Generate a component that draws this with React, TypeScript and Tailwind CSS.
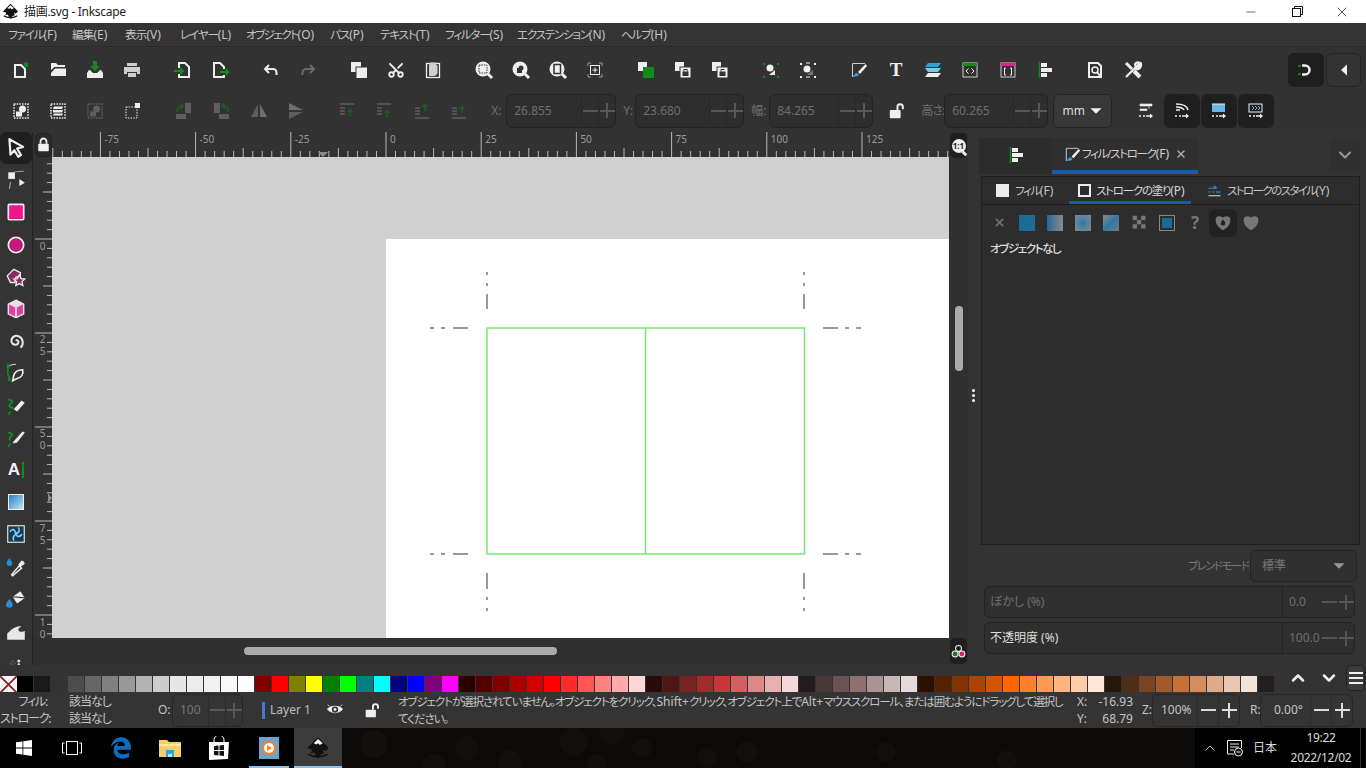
import React from 'react';
import { Scissors, ChevronUp, ChevronDown, Minus, X } from 'lucide-react';
import { FaEdgeLegacy } from 'react-icons/fa';

const W = '#efefef';
const G = '#128a1e';
const D = '#5e5e5e';
const M = '#e0218a';
const B = '#3a9bd5';

const S: React.FC<{ children: React.ReactNode; size?: number }> = ({ children, size = 20 }) => (
  <svg width={size} height={size} viewBox="0 0 20 20" fill="none">{children}</svg>
);

const Mag: React.FC<{ children: React.ReactNode }> = ({ children }) => (
  <S>
    <circle cx="9" cy="9" r="7.5" fill={W} />
    <path d="M14 14l4 4" stroke={W} strokeWidth="3" />
    {children}
  </S>
);

const OpenLock: React.FC<{ size: number }> = ({ size }) => (
  <S size={size}>
    <rect x="2" y="9" width="12" height="9" rx="1" fill={W} />
    <path d="M10.500 9V5.500a3 3 0 0 1 6 0V8" stroke={W} strokeWidth="2.200" />
  </S>
);

const ClosedLock: React.FC<{ size: number }> = ({ size }) => (
  <S size={size}>
    <rect x="3" y="9" width="14" height="10" rx="1" fill={W} />
    <path d="M6 9V6a4 4 0 0 1 8 0v3" stroke={W} strokeWidth="2.400" />
  </S>
);

// toolbar 1
const row1Groups: { key: string; icon: React.ReactNode }[][] = [
  [
    { key: 'new', icon: <S><path d="M4 5h6l4 4v8H4z" stroke={W} strokeWidth="2" /><path d="M15 1l1 2.3 2.4.3-1.8 1.6.5 2.4-2.1-1.2-2.1 1.2.5-2.4L11.600 3.600l2.400-.3z" fill={G} /></S> },
    { key: 'open', icon: <S><path d="M3 3h5l2 2h7v2H6.500L3 10z" fill={W} /><path d="M7 8.500h11V16H3v-3z" fill={W} /></S> },
    { key: 'save', icon: <S><path d="M8 1h4v5h3l-5 5-5-5h3z" fill={G} /><path d="M2 13l2-3h1l3 3h4l3-3h1l2 3v5H2z" fill={W} /></S> },
    { key: 'print', icon: <S><path d="M5 3h10v3H5zM2 7h16v7h-3v-2H5v2H2z" fill="#cfcfcf" /><path d="M6 13h8v4H6z" fill="#cfcfcf" /></S> },
  ],
  [
    { key: 'import', icon: <S><path d="M6 8V3h6l4 4v10H6v-3" stroke={W} strokeWidth="2" /><path d="M1 11h8M7 8l3 3-3 3" stroke={G} strokeWidth="2" /></S> },
    { key: 'export', icon: <S><path d="M14 9V7l-4-4H4v14h10v-2" stroke={W} strokeWidth="2" /><path d="M10 12h8M15.500 9l3 3-3 3" stroke={G} strokeWidth="2" /></S> },
  ],
  [
    { key: 'undo', icon: <S><path d="M8 5L4 9l4 4" stroke={W} strokeWidth="2" /><path d="M5 9h7a3.500 3.500 0 0 1 3.500 3.500V15" stroke={W} strokeWidth="2" /></S> },
    { key: 'redo', icon: <S><path d="M12 5l4 4-4 4" stroke="#6a6a6a" strokeWidth="2" /><path d="M15 9H8a3.500 3.500 0 0 0-3.500 3.500V15" stroke="#6a6a6a" strokeWidth="2" /></S> },
  ],
  [
    { key: 'dup', icon: <S><rect x="2" y="2" width="10" height="10" fill={W} /><rect x="7" y="7" width="11.500" height="11.500" fill={W} stroke="#333" /></S> },
    { key: 'cut', icon: <Scissors size={18} color={W} strokeWidth={2.4} className="-rotate-90" /> },
    { key: 'paste', icon: <S><rect x="3.500" y="3.500" width="13" height="14" stroke={W} strokeWidth="1.300" /><path d="M7 2.500h6v2l1.500 1v8L12 16H6V5.500z" fill="#cfcfcf" /></S> },
  ],
  [
    { key: 'zsel', icon: <Mag><rect x="5" y="5" width="8" height="8" stroke="#333" strokeDasharray="1.500 1" /></Mag> },
    { key: 'zdraw', icon: <Mag><circle cx="10" cy="8" r="2.500" fill="#333" /><rect x="6" y="8" width="5" height="5" fill="#333" /></Mag> },
    { key: 'zpage', icon: <Mag><rect x="6" y="4.500" width="6.500" height="9" stroke="#333" strokeWidth="1.500" /></Mag> },
    { key: 'zcen', icon: <S><path d="M3 6V3h3M14 3h3v3M17 14v3h-3M6 17H3v-3" stroke="#999" /><rect x="5.500" y="5.500" width="9" height="9" stroke={W} /><path d="M10 7.500v5M7.500 10h5" stroke={W} /></S> },
  ],
  [
    { key: 'group', icon: <S><rect x="2" y="2" width="9" height="9" fill={W} /><rect x="7" y="7" width="11" height="11" fill={G} /></S> },
    { key: 'ungroup', icon: <S><rect x="2" y="2" width="9" height="9" fill={W} /><rect x="7" y="7" width="11" height="11" fill={W} stroke="#333" /><rect x="9.500" y="11.500" width="6" height="4.500" fill="#333" /><path d="M10.800 11.500V9.500h3.400v2" stroke="#333" /></S> },
    { key: 'pattern', icon: <S><rect x="2" y="2" width="9" height="9" fill={W} /><rect x="7" y="7" width="11" height="11" fill={W} stroke="#333" /><rect x="9.500" y="11.500" width="6" height="4.500" fill="#333" /><path d="M11 11.500V9.500h3.500" stroke="#333" /></S> },
  ],
  [
    { key: 'nodes', icon: <S><path d="M2 3h2v2H2zM16 3h2v2h-2zM2 16h2v2H2zM16 16h2v2h-2z" fill={G} /><circle cx="9" cy="8" r="3.500" fill={W} /><path d="M8 15l6-5v5z" fill={W} /></S> },
    { key: 'nodes2', icon: <S><path d="M2 3h2v2H2zM16 3h2v2h-2zM2 16h2v2H2zM16 16h2v2h-2z" fill={W} /><path d="M8 3h4M8 17h4" stroke={W} /><circle cx="9" cy="9" r="3.500" fill={W} /><path d="M9 15l6-5v5z" fill="#777" /></S> },
  ],
  [
    { key: 'fill', icon: <S><path d="M3.500 17V3.500H16" stroke="#cfcfcf" /><path d="M16.500 4L9 12l2 2 7-8z" fill={W} /><path d="M8 13c-2 0-2.500 2-4.500 3.500C6 17 9 16.500 10 15z" fill={B} /></S> },
    { key: 'text', icon: <span className="font-['Liberation_Serif',serif] text-[19px] font-bold leading-none text-[#efefef]">T</span> },
    { key: 'layers', icon: <S><path d="M5 3h13l-3 4H2z" fill={B} /><path d="M2 8h16l-3 4H5z" fill="#7fc6ea" /><path d="M5 13h13l-3 4H2z" fill={W} /></S> },
    { key: 'xml', icon: <S><rect x="3" y="3" width="14" height="14" stroke="#cfcfcf" /><rect x="3" y="3" width="14" height="3" fill={G} /><path d="M8.500 8.500L6 11l2.500 2.500M11.500 8.500L14 11l-2.500 2.500" stroke={W} /></S> },
    { key: 'css', icon: <S><rect x="3" y="3" width="14" height="14" stroke="#cfcfcf" /><rect x="3" y="3" width="14" height="3" fill={M} /><path d="M8 8H6.500v7H8M12 8h1.500v7H12" stroke={W} /></S> },
    { key: 'align', icon: <S><path d="M4.500 2v16" stroke={G} strokeWidth="1.500" /><path d="M6 3h6v4H6zM6 8h11v4H6zM6 13h6v4H6z" fill={W} /></S> },
  ],
  [
    { key: 'docprops', icon: <S><path d="M4 3h9l3 3v11H4z" stroke={W} strokeWidth="2" /><circle cx="10" cy="10" r="3" stroke={W} strokeWidth="1.500" /><path d="M12 12l4 5" stroke={W} strokeWidth="2" /></S> },
    { key: 'prefs', icon: <S><path d="M3 3l6 6" stroke={W} strokeWidth="3" /><path d="M11 11l6 6" stroke={W} strokeWidth="4" /><path d="M3 17L13 7M12 4a4 4 0 0 1 5-1l-3 3 1 1 3-3a4 4 0 0 1-5 5z" stroke={W} strokeWidth="2.200" /></S> },
  ],
];

const AlignGrey: React.FC<{ y: number; top?: boolean }> = ({ y, top }) => (
  <S>
    <path d={top ? 'M3 3h14' : 'M3 17h14'} stroke={D} strokeWidth="1.500" />
    <path d="M3 7h5M3 10h5M3 13h5" stroke={D} strokeWidth="1.500" />
    <path d={`M13 ${y + 6}v-6M10.500 ${y + 2}l2.500-2.500 2.500 2.500`} stroke="#1c5a24" strokeWidth="1.800" />
  </S>
);

const row2Left: { key: string; icon: React.ReactNode }[][] = [
  [
    { key: 'all', icon: <S><rect x="3" y="3" width="14" height="14" stroke={W} strokeWidth="1.500" strokeDasharray="1.500 1.200" /><circle cx="11.500" cy="8" r="3.500" fill={W} /><rect x="5" y="10.500" width="6" height="5" fill={W} /></S> },
    { key: 'all2', icon: <S><rect x="3" y="3" width="14" height="14" stroke={W} strokeWidth="1.500" strokeDasharray="1.500 1.200" /><path d="M6 5.500h9l-1 2.500H5zM5 9h10l-1 2.500H5zM6 12.500h9l-1 2H5z" fill={W} /></S> },
    { key: 'inv', icon: <S><rect x="3" y="3" width="14" height="14" stroke={D} strokeWidth="1.500" strokeDasharray="1.500 1.200" /><circle cx="11.500" cy="8" r="3.500" fill={D} /><rect x="5" y="10.500" width="6" height="5" fill={D} /></S> },
    { key: 'touch', icon: <S><rect x="3" y="6" width="11" height="11" stroke={W} strokeDasharray="1.500 1.200" /><rect x="12" y="2" width="5" height="5" fill={W} /></S> },
  ],
  [
    { key: 'rl', icon: <S><rect x="11" y="2" width="6" height="10" fill={D} /><rect x="2" y="13" width="10" height="5" fill={D} /><path d="M3 11c0-4 2-6 6-6M6.500 2.500L9 5l-2.500 2.500" stroke="#1c5a24" strokeWidth="2" /></S> },
    { key: 'rr', icon: <S><rect x="3" y="2" width="6" height="10" fill={D} /><rect x="8" y="13" width="10" height="5" fill={D} /><path d="M17 11c0-4-2-6-6-6M13.500 2.500L11 5l2.500 2.500" stroke="#1c5a24" strokeWidth="2" /></S> },
    { key: 'fh', icon: <S><path d="M9 3L2 16h7z" fill={D} /><path d="M11 3l7 13h-7z" fill="#6e6e6e" /></S> },
    { key: 'fv', icon: <S><path d="M3 2l14 7H3z" fill="#6e6e6e" /><path d="M3 18l14-7H3z" fill={D} /><path d="M2 10h16" stroke="#333" /></S> },
  ],
  [
    { key: 'a1', icon: <AlignGrey y={9} top /> },
    { key: 'a2', icon: <AlignGrey y={10} top /> },
    { key: 'a3', icon: <AlignGrey y={4} /> },
    { key: 'a4', icon: <AlignGrey y={6} /> },
  ],
];

const tools: { key: string; icon: React.ReactNode; active?: boolean }[] = [
  { key: 'select', active: true, icon: <S size={22}><path d="M4 2l12.500 7-5.500 1.500 3.500 6-2.500 1.500-3.500-6L5 16z" stroke={W} strokeWidth="2" strokeLinejoin="round" /></S> },
  { key: 'node', icon: <S size={22}><rect x="3" y="3" width="6" height="6" fill={W} /><path d="M8 3c3-1 5-1 9-1M5 12l-1 6" stroke="#aaa" /><path d="M13 9l5 3.500-5 3z" fill={W} /></S> },
  { key: 'rect', icon: <S size={22}><rect x="3" y="3" width="14" height="14" rx="1" fill="#f0148c" stroke={W} strokeWidth="1.500" /></S> },
  { key: 'circle', icon: <S size={22}><circle cx="10" cy="10" r="7" fill="#c2197c" stroke={W} strokeWidth="1.500" /></S> },
  { key: 'star', icon: <S size={22}><path d="M2 9l6-6 6 3 0 3-4 1-1 5-4 0z" fill="#8a2a66" stroke={W} strokeWidth="1.200" /><path d="M13 8l1.600 3.400 3.400.4-2.500 2.400.7 3.500-3.200-1.700-3.200 1.700.7-3.500L8 11.800l3.400-.4z" fill="#8a2a66" stroke={W} strokeWidth="1.200" /></S> },
  { key: 'box', icon: <S size={22}><path d="M10 2l7 3.500v9L10 18l-7-3.500v-9z" fill="#e33fa0" stroke={W} strokeWidth="1.200" /><path d="M3 5.500L10 9l7-3.500L10 2z" fill="#f3d7e8" /><path d="M10 9v9" stroke={W} strokeWidth="1.500" /></S> },
  { key: 'spiral', icon: <S size={22}><path d="M10 10c1-1.500 3 0 2 2-1 2-5 2-6-1-1-4 3-7 7-5 4 2 4 8 1 10" stroke="#e8e8e8" strokeWidth="1.800" /></S> },
  { key: 'pen', icon: <S size={22}><path d="M2 5c2-2 5-3 8-3" stroke="#ccc" /><circle cx="3" cy="3" r="1.500" fill={G} /><path d="M3 4c-1 4 0 9 1 11" stroke={G} strokeWidth="1.500" /><circle cx="4" cy="16" r="1.500" fill={G} /><path d="M16 7c1 4-1 7-5 8l-4 2 1-5c1-3 4-5 8-5z" stroke={W} strokeWidth="1.500" /></S> },
  { key: 'pencil', icon: <S size={22}><path d="M3 18l2-3M3 4c2 1 5 1 3 3S3 10 5 11s3 0 2 2" stroke={G} strokeWidth="1.800" /><path d="M8 13l7-8 3 2-7 8z" fill={W} /></S> },
  { key: 'callig', icon: <S size={22}><path d="M3 18l2-3M3 5c2 1 5 1 3 3S3 11 5 12" stroke={G} strokeWidth="1.800" /><path d="M8 13l8-9 2 1-7 9-4 1z" fill={W} /></S> },
  { key: 'text', icon: <div className="flex items-center"><span className="font-['Liberation_Sans',sans-serif] text-[17px] font-bold leading-none text-[#efefef]">A</span><div className="ml-[2px] h-[16px] w-[2px] bg-[#128a1e]" /></div> },
  { key: 'grad', icon: <div className="h-[16px] w-[16px] border border-[#efefef] bg-linear-to-br from-[#1f7fc0] to-[#bfe6fa]" /> },
  { key: 'mesh', icon: <S size={22}><rect x="2.500" y="2.500" width="15" height="15" fill="#163c55" stroke={W} /><path d="M4.500 8c2-3 4-3 5.500 2 1 3 3.500 3 5.500 0M8 16c-1-2-1-4 2-6s4-3 2-6" stroke="#7fd0f5" strokeWidth="1.400" /></S> },
  { key: 'dropper', icon: <S size={22}><path d="M4 2c1.500 2 2.500 3 2.500 4.500a2.500 2.500 0 0 1-5 0C1.500 5 2.500 4 4 2z" fill="#2590d8" /><path d="M6 17l7-8 2 2-8 7z" stroke={W} strokeWidth="1.300" /><path d="M12 8l3-4 2 1 1 2-4 3z" fill={W} /></S> },
  { key: 'bucket', icon: <S size={22}><path d="M7 8l7-5 4 6-7 5z" fill={W} /><path d="M7 8l11 1" stroke="#333" /><path d="M4 10c1.500 2 3 3.500 3 5a3 3 0 0 1-6 0c0-1.500 1.500-3 3-5z" fill="#2590d8" /></S> },
  { key: 'tweak', icon: <S size={22}><path d="M2 18v-6c2-1 3-3 5-4 3-2 6-3 8-2-2 1-3 2-3 3 1 2 4 2 6 1v8z" fill="#e8e8e8" /></S> },
  { key: 'more', icon: <S size={16}><circle cx="6" cy="10" r="2.500" stroke="#999" strokeDasharray="1 1" /><path d="M11 14l2-4h1l2 4z" fill="#ddd" /><circle cx="13.500" cy="7.500" r="2" fill="#ddd" /></S> },
];

const palette = [
  '#000000', '#1a1a1a', '#333333', '#4d4d4d', '#666666', '#808080', '#999999', '#b3b3b3', '#cccccc', '#e6e6e6', '#ececec', '#f2f2f2', '#f9f9f9', '#ffffff',
  '#800000', '#ff0000', '#808000', '#ffff00', '#008000', '#00ff00', '#008080', '#00ffff', '#000080', '#0000ff', '#800080', '#ff00ff',
  '#2b0000', '#550000', '#800000', '#aa0000', '#d40000', '#ff0000', '#ff2a2a', '#ff5555', '#ff8080', '#ffaaaa', '#ffd5d5',
  '#280b0b', '#501616', '#782121', '#a02c2c', '#c83737', '#d35f5f', '#de8787', '#e9afaf', '#f4d7d7',
  '#241c1c', '#483737', '#6c5353', '#916f6f', '#ac9393', '#c8b7b7', '#e3dbdb',
  '#2b1100', '#552200', '#803300', '#aa4400', '#d45500', '#ff6600', '#ff7f2a', '#ff9955', '#ffb380', '#ffccaa', '#ffe6d5',
  '#28170b', '#502d16', '#784421', '#a05a2c', '#c87137', '#d38d5f', '#deaa87', '#e9c6af', '#f4e3d7', '#241f1c',
];

const menus = [
  { kana: 'ファイル', key: '(F)', w: 'w-[64px]', t: 'tracking-[-1.100px]' },
  { kana: '編集', key: '(E)', w: 'w-[53px]', t: 'tracking-[-0.800px]' },
  { kana: '表示', key: '(V)', w: 'w-[55px]', t: 'tracking-[-0.800px]' },
  { kana: 'レイヤー', key: '(L)', w: 'w-[66px]', t: 'tracking-[-1.100px]' },
  { kana: 'オブジェクト', key: '(O)', w: 'w-[84px]', t: 'tracking-[-1.500px]' },
  { kana: 'パス', key: '(P)', w: 'w-[50px]', t: 'tracking-[-1px]' },
  { kana: 'テキスト', key: '(T)', w: 'w-[65px]', t: 'tracking-[-1.100px]' },
  { kana: 'フィルター', key: '(S)', w: 'w-[72px]', t: 'tracking-[-1.200px]' },
  { kana: 'エクステンション', key: '(N)', w: 'w-[104px]', t: 'tracking-[-1.200px]' },
  { kana: 'ヘルプ', key: '(H)', w: 'w-[60px]', t: 'tracking-[-1.100px]' },
];

const Logo: React.FC<{ size: number }> = ({ size }) => (
  <svg width={size} height={size} viewBox="0 0 20 20">
    <path d="M10 1l9 9-3 2.500-2-1 1 3-3 1v2l-2 1-2-2-1-3-3 1 1-3-4-1.500z" fill="#111" />
    <path d="M10 2.500L6.500 6l2 1 1.500-1 1.500 1.500L14 6z" fill="#f4f4f4" />
    <path d="M2 15c4 3 12 3 16 0" stroke="#111" strokeWidth="1.200" fill="none" />
  </svg>
);

const Stepper: React.FC<{ color: string; line: string; wide?: boolean }> = ({ color, line, wide }) => (
  <div className="flex h-full items-center">
    <div className={`flex h-full items-center justify-center border-l ${line} ${wide ? 'w-[21px]' : 'w-[17px]'}`}>
      <div className={`h-[2px] w-[15px] ${color}`} />
    </div>
    <div className={`relative flex h-full items-center justify-center border-l ${line} ${wide ? 'w-[21px]' : 'w-[17px]'}`}>
      <div className={`h-[2px] w-[15px] ${color}`} />
      <div className={`absolute h-[15px] w-[2px] ${color}`} />
    </div>
  </div>
);

const NumField: React.FC<{ value: string; w: string }> = ({ value, w }) => (
  <div className="flex h-[34px] shrink-0 items-center rounded-[6px] border border-[#232323] bg-[#2e2e2e]">
    <span className={`${w} pl-[7px] text-[12px] text-[#6f6f6f]`}>{value}</span>
    <Stepper color="bg-[#585858]" line="border-[#292929]" />
  </div>
);

const TopRuler: React.FC = () => {
  const ticks = [];
  for (let i = -36; i < 60; i++) {
    const x = 334 + i * 9.52;
    const h = i % 10 === 0 ? 25 : i % 5 === 0 ? 9 : 6;
    ticks.push(<line key={i} x1={x} x2={x} y1={25 - h} y2={25} stroke="#b9b9b9" strokeWidth="1" />);
  }
  const labels = [-75, -50, -25, 0, 25, 50, 75, 100, 125];
  return (
    <svg width="897" height="25" className="shrink-0">
      {ticks}
      {labels.map((n) => (
        <text key={n} x={334 + n * 3.808 + 4} y={11} fontSize="10" fill="#9a9a9a" fontFamily="Noto Sans, sans-serif">{n}</text>
      ))}
      <path d="M266 20h10l-5 5z" fill="#8a8a8a" />
    </svg>
  );
};

const LeftRuler: React.FC = () => {
  const ticks = [];
  for (let i = -8; i < 43; i++) {
    const y = 82 + i * 9.4;
    const w = i % 10 === 0 ? 17 : i % 5 === 0 ? 9 : 5;
    ticks.push(<line key={i} x1={19 - w} x2={19} y1={y} y2={y} stroke="#b9b9b9" strokeWidth="1" />);
  }
  const labels: { y: number; t: string }[] = [
    { y: 93, t: '0' }, { y: 186, t: '2' }, { y: 198, t: '5' }, { y: 280, t: '5' }, { y: 292, t: '0' },
    { y: 375, t: '7' }, { y: 387, t: '5' }, { y: 469, t: '1' }, { y: 481, t: '0' },
  ];
  return (
    <svg width="19" height="490" className="relative z-10 shrink-0">
      {ticks}
      {labels.map((l) => (
        <text key={l.y} x="9.500" y={l.y} fontSize="10" textAnchor="middle" fill="#9a9a9a" fontFamily="Noto Sans, sans-serif">{l.t}</text>
      ))}
      <path d="M15 336l4 5-4 5z" fill="#8a8a8a" />
    </svg>
  );
};

const Artwork: React.FC = () => (
  <svg width="563" height="399" viewBox="386 239 563 399" className="block">
    <g fill="none" stroke="#6fe66f" strokeWidth="1.400">
      <rect x="487" y="328" width="317.500" height="226" />
      <line x1="645.500" x2="645.500" y1="328" y2="554" />
    </g>
    <g fill="none" stroke="#777" strokeWidth="1.500">
      {[487, 804].map((x) => (
        <g key={x}>
          <path d={`M${x} 272v3M${x} 283v3M${x} 294v15M${x} 573v16M${x} 597v3M${x} 608v3`} />
        </g>
      ))}
      {[328, 554].map((y) => (
        <g key={y}>
          <path d={`M430 ${y}h4M441 ${y}h4M453 ${y}h15M823 ${y}h15M845 ${y}h4M856 ${y}h5`} />
        </g>
      ))}
    </g>
  </svg>
);

const TaskIcon: React.FC<{ children: React.ReactNode; cls: string }> = ({ children, cls }) => (
  <div className={`relative flex h-full shrink-0 items-center justify-center ${cls}`}>{children}</div>
);

export default function App() {
  return (
    <div className="flex h-[768px] w-[1366px] flex-col overflow-hidden bg-[#333333] font-['Noto_Sans','Noto_Sans_CJK_JP',sans-serif] [font-feature-settings:'palt']">
      {/* title bar */}
      <div className="flex h-[23px] shrink-0 items-center bg-white pl-[2px] text-[12px] text-[#222]">
        <Logo size={17} />
        <span className="ml-[5px] tracking-[-0.3px]">描画.svg - Inkscape</span>
        <div className="ml-auto flex items-center">
          <div className="flex w-[46px] justify-center"><Minus size={14} strokeWidth={1} color="#111" /></div>
          <div className="flex w-[46px] justify-center">
            <svg width="11" height="11" viewBox="0 0 11 11" fill="none" stroke="#111"><rect x=".5" y="2.500" width="8" height="8" /><path d="M2.500 2.500v-2h8v8h-2" /></svg>
          </div>
          <div className="flex w-[46px] justify-center pr-[2px]"><X size={16} strokeWidth={1} color="#111" /></div>
        </div>
      </div>

      {/* menu */}
      <div className="flex h-[24px] shrink-0 items-center border-b border-[#2b2b2b] bg-[#343434] pl-[8px] text-[12px] text-[#c4c4c4]">
        {menus.map((m) => (
          <span key={m.key} className={`${m.w} whitespace-nowrap`}>
            <span className={`${m.t} text-[11.500px]`}>{m.kana}</span>{m.key}
          </span>
        ))}
      </div>

      {/* commands toolbar */}
      <div className="flex h-[45px] shrink-0 items-center bg-[#323232] pl-[2px]">
        {row1Groups.map((g, i) => (
          <div key={i} className="mr-[13.500px] flex">
            {g.map((b) => (
              <div key={b.key} className="flex h-[37px] w-[37.200px] items-center justify-center">{b.icon}</div>
            ))}
          </div>
        ))}
        <div className="ml-auto mr-[5px] flex gap-[2px]">
          <div className="flex h-[34px] w-[36px] items-center justify-center rounded-[6px] bg-[#1f1f1f]">
            <S><circle cx="3.500" cy="6" r="1.300" fill={G} /><circle cx="3.500" cy="14" r="1.300" fill={G} /><path d="M6 5.500h3a4.500 4.500 0 0 1 0 9H6" stroke={W} strokeWidth="2.500" /></S>
          </div>
          <div className="flex h-[34px] w-[35px] items-center justify-center rounded-[6px] border border-[#242424] bg-[#333]">
            <S><path d="M13 4.500v11L7 10z" fill={W} /></S>
          </div>
        </div>
      </div>

      {/* tool controls toolbar */}
      <div className="flex h-[40px] shrink-0 items-center bg-[#323232] pb-[3px] pl-[2px]">
        {row2Left.map((g, i) => (
          <div key={i} className="mr-[13.500px] flex">
            {g.map((b) => (
              <div key={b.key} className="flex h-[37px] w-[37.400px] items-center justify-center">{b.icon}</div>
            ))}
          </div>
        ))}
        <span className="w-[15px] text-[12px] text-[#6f6f6f]">X:</span>
        <NumField value="26.855" w="w-[74px]" />
        <span className="ml-[7px] w-[12px] text-[12px] text-[#6f6f6f]">Y:</span>
        <NumField value="23.680" w="w-[73px]" />
        <span className="ml-[7px] w-[18px] text-[12px] text-[#6f6f6f]">幅:</span>
        <NumField value="84.265" w="w-[68px]" />
        <div className="flex w-[48px] shrink-0 justify-center"><OpenLock size={18} /></div>
        <span className="w-[23px] whitespace-nowrap text-[12px] tracking-[-1px] text-[#6f6f6f]">高さ:</span>
        <NumField value="60.265" w="w-[68px]" />
        <div className="ml-[5px] flex h-[34px] w-[59px] shrink-0 items-center justify-center gap-[4px] rounded-[6px] border border-[#232323] bg-[#383838] text-[12px] text-[#dddddd]">
          mm
          <S size={14}><path d="M2 6h16l-8 8z" fill={W} /></S>
        </div>
        <div className="ml-[15px] flex h-[34px] w-[37px] shrink-0 items-center justify-center">
          <S><path d="M4 3h12v2H4zM13 5v3M4 8h7v1.500H4z" fill={W} stroke={W} strokeWidth=".6" /><path d="M3 15h2M7 15h2M10 15h6" stroke={W} strokeWidth="1.500" /><path d="M14 12.500l3 2.500-3 2.500z" fill={W} /></S>
        </div>
        {['a', 'b', 'c'].map((k) => (
          <div key={k} className="mr-[1px] flex h-[34px] w-[36px] shrink-0 items-center justify-center rounded-[6px] bg-[#1f1f1f]">
            {k === 'a' && <S><path d="M4 3c6 0 11 1 12 6M4 6c4 0 7 1 8 3M4 9h4" stroke={W} strokeWidth="1.500" /><path d="M3 15h2M7 15h2M10 15h6" stroke={W} strokeWidth="1.500" /><path d="M14 12.500l3 2.500-3 2.500z" fill={W} /></S>}
            {k === 'b' && <S><rect x="3" y="3" width="13" height="8" fill="#6bb8e6" /><path d="M3 3h13" stroke={W} /><path d="M3 15h2M7 15h2M10 15h6" stroke={W} strokeWidth="1.500" /><path d="M14 12.500l3 2.500-3 2.500z" fill={W} /></S>}
            {k === 'c' && <S><rect x="3" y="3" width="13" height="8" stroke={W} /><path d="M6 5l2 2-2 2M9 5l2 2-2 2M12 5l2 2-2 2" stroke="#6bb8e6" /><path d="M3 15h2M7 15h2M10 15h6" stroke={W} strokeWidth="1.500" /><path d="M14 12.500l3 2.500-3 2.500z" fill={W} /></S>}
          </div>
        ))}
      </div>

      {/* main */}
      <div className="flex h-[533px] shrink-0">
        {/* tools */}
        <div className="flex w-[33px] shrink-0 flex-col border-r border-[#222] bg-[#343434]">
          {tools.map((t) => (
            <div key={t.key} className={`flex h-[32.200px] shrink-0 items-center justify-center ${t.active ? 'rounded-[6px] bg-[#1f1f1f]' : ''}`}>{t.icon}</div>
          ))}
        </div>

        {/* canvas column */}
        <div className="flex w-[916px] shrink-0 flex-col">
          <div className="flex h-[25px] shrink-0 bg-[#323232]">
            <div className="flex h-[25px] w-[19px] shrink-0 items-center justify-end">
              <div className="flex h-[24px] w-[17px] items-center justify-center rounded-[5px] border border-[#222] bg-[#2b2b2b]">
                <ClosedLock size={15} />
              </div>
            </div>
            <TopRuler />
          </div>
          <div className="flex h-[481px] shrink-0">
            <div className="h-[481px] w-[19px] shrink-0 bg-[#323232]"><LeftRuler /></div>
            <div className="flex-1 bg-[#d0d0d0] pl-[334px] pt-[82px]">
              <div className="h-[399px] w-[563px] bg-white"><Artwork /></div>
            </div>
          </div>
          <div className="h-[27px] shrink-0 bg-[#303030] pl-[211px] pt-[9px]">
            <div className="h-[8px] w-[313px] rounded-full bg-[#ababab]" />
          </div>
        </div>

        {/* vertical scroll strip */}
        <div className="flex w-[19px] shrink-0 flex-col items-center bg-[#303030]">
          <div className="relative mt-[1px] flex h-[25px] w-[17px] items-center justify-center rounded-[5px] bg-[#1f1f1f]">
            <div className="flex h-[14px] w-[14px] items-center justify-center rounded-full bg-[#efefef] text-[8px] font-bold leading-none text-[#222]">1:1</div>
            <div className="absolute bottom-[2px] right-[1px] h-[5px] w-[3px] -rotate-45 bg-[#efefef]" />
          </div>
          <div className="mt-[148px] h-[65px] w-[8px] rounded-full bg-[#ababab]" />
          <div className="mt-auto mb-[1px] flex h-[26px] w-[17px] items-center justify-center rounded-[5px] bg-[#1f1f1f]">
            <S size={17}><circle cx="10" cy="6.500" r="3.500" stroke={W} strokeWidth="1.200" /><circle cx="6" cy="13" r="3.500" fill="#1a7a2a" stroke={W} strokeWidth="1.200" /><circle cx="14" cy="13" r="3.500" fill="#d6277f" stroke={W} strokeWidth="1.200" /></S>
          </div>
        </div>

        {/* handle */}
        <div className="flex w-[11px] shrink-0 flex-col items-center justify-center gap-[2px] bg-[#333] pb-[6px]">
          <div className="h-[3px] w-[3px] rounded-full bg-white" />
          <div className="h-[3px] w-[3px] rounded-full bg-white" />
          <div className="h-[3px] w-[3px] rounded-full bg-white" />
        </div>

        {/* dialogs */}
        <div className="flex w-[387px] shrink-0 flex-col bg-[#333] pt-[6px]">
          <div className="flex h-[36px] shrink-0">
            <div className="flex w-[73px] items-center justify-center bg-[#2c2c2c] pb-[3px]">
              <S><path d="M4.500 2v16" stroke={G} strokeWidth="1.500" /><path d="M6 3h6v4H6zM6 8h11v4H6zM6 13h6v4H6z" fill={W} /></S>
            </div>
            <div className="flex w-[146px] items-center border-b-[4px] border-[#1c5aa8] bg-[#2f2f2f] pl-[11px] text-[12px] text-[#cfcfcf]">
              <S size={19}><path d="M3.500 17V3.500H16" stroke="#cfcfcf" /><path d="M16.500 4L9 12l2 2 7-8z" fill={W} /><path d="M8 13c-2 0-2.500 2-4.500 3.500C6 17 9 16.500 10 15z" fill={B} /></S>
              <span className="whitespace-nowrap"><span className="text-[11.500px] tracking-[-1.300px]">フィル/ストローク</span>(F)</span>
              <X size={12} strokeWidth={3} color="#aaa" className="ml-[6px]" />
            </div>
            <div className="flex flex-1 justify-end pr-[6px]">
              <div className="flex h-[33px] w-[30px] items-center justify-center bg-[#303030]"><ChevronDown size={20} color="#999" strokeWidth={2.500} /></div>
            </div>
          </div>

          {/* fill & stroke frame */}
          <div className="ml-[2px] mt-[2px] flex h-[369px] w-[379px] shrink-0 flex-col border border-[#1f1f1f] bg-[#2d2d2d]">
            <div className="flex h-[28px] shrink-0 items-center border-b border-[#1f1f1f] text-[12px] text-[#c4c4c4]">
              <div className="flex h-full w-[87px] shrink-0 items-center pl-[14px]">
                <div className="h-[13px] w-[13px] shrink-0 bg-[#ececec]" />
                <span className="ml-[6px] whitespace-nowrap"><span className="text-[11.500px] tracking-[-1.400px]">フィル</span>(F)</span>
              </div>
              <div className="flex h-full w-[122px] shrink-0 items-center border-b-[3px] border-[#1c5aa8] pl-[9px] pt-[3px] text-[#d8d8d8]">
                <div className="h-[13px] w-[13px] shrink-0 border-2 border-[#ececec]" />
                <span className="ml-[5px] whitespace-nowrap"><span className="text-[11.500px] tracking-[-1.250px]">ストロークの塗り</span>(P)</span>
              </div>
              <div className="flex h-full items-center pl-[16px]">
                <S size={15}><path d="M2 7h10M9 4l4 3M2 12h3M7 12h3M12 12h6" stroke="#3a9bd5" strokeWidth="1.500" /><path d="M2 17h16" stroke="#cfcfcf" strokeWidth="1.500" /></S>
                <span className="ml-[5px] whitespace-nowrap"><span className="text-[11.500px] tracking-[-1.600px]">ストロークのスタイル</span>(Y)</span>
              </div>
            </div>
            <div className="flex h-[35px] shrink-0 items-center pl-[3px]">
              <div className="flex w-[28px] justify-center"><X size={13} strokeWidth={3} color="#777" /></div>
              <div className="flex w-[28px] justify-center"><div className="h-[16px] w-[16px] bg-[#1a6b96]" /></div>
              <div className="flex w-[28px] justify-center"><div className="h-[16px] w-[16px] bg-linear-to-r from-[#1a6b96] to-[#888]" /></div>
              <div className="flex w-[28px] justify-center"><div className="h-[16px] w-[16px] bg-radial from-[#1a7ab0] to-[#888]" /></div>
              <div className="flex w-[28px] justify-center"><div className="h-[16px] w-[16px] bg-linear-to-br from-[#888] via-[#2a78a8] to-[#777]" /></div>
              <div className="flex w-[28px] justify-center">
                <S size={17}><rect x="2" y="2" width="16" height="16" fill="#333" /><path d="M2 2h5v5H2zM12 2h5v5h-5zM7 7h5v5H7zM2 12h5v5H2zM12 12h5v5h-5z" fill="#777" /></S>
              </div>
              <div className="flex w-[28px] justify-center"><div className="h-[16px] w-[16px] border border-[#888] p-[2px]"><div className="h-full w-full bg-[#1a6b96]" /></div></div>
              <div className="flex w-[28px] justify-center text-[17px] font-bold leading-none text-[#777]">?</div>
              <div className="flex h-[28px] w-[28px] items-center justify-center rounded-[6px] bg-[#222]">
                <S size={18}><path d="M10 18C4 15 1 10 2 5c1-3 5-3 8-1 3-2 7-2 8 1 1 5-2 10-8 13z" fill="#777" /><path d="M10 6c-2 2-3 4-2 6 1 1 3 1 4 0 1-2 0-4-2-6z" fill="#222" /></S>
              </div>
              <div className="flex w-[28px] justify-center">
                <S size={18}><path d="M10 18C4 15 1 10 2 5c1-3 5-3 8-1 3-2 7-2 8 1 1 5-2 10-8 13z" fill="#777" /></S>
              </div>
            </div>
            <div className="pl-[8px] text-[11.500px] font-medium tracking-[-1.400px] text-[#dedede]">オブジェクトなし</div>
          </div>

          {/* blend */}
          <div className="mt-[5px] flex h-[32px] shrink-0 items-center justify-end pr-[9px]">
            <span className="text-[11.500px] tracking-[-1.500px] text-[#777]">ブレンドモード:</span>
            <div className="flex h-[32px] w-[107px] items-center justify-between rounded-[6px] border border-[#232323] bg-[#303030] pl-[11px] pr-[10px] text-[12px] text-[#777]">
              標準
              <S size={14}><path d="M2 6h16l-8 8z" fill="#999" /></S>
            </div>
          </div>
          <div className="ml-[5px] mt-[4px] flex h-[32px] w-[371px] shrink-0 items-center rounded-[6px] border border-[#232323] bg-[#2f2f2f] text-[12px]">
            <span className="flex h-full flex-1 items-center border-r border-[#232323] pl-[5px] text-[#707070]">ぼかし (%)</span>
            <span className="w-[37px] pl-[6px] text-[#707070]">0.0</span>
            <Stepper color="bg-[#555]" line="border-transparent" />
          </div>
          <div className="ml-[5px] mt-[4px] flex h-[32px] w-[371px] shrink-0 items-center rounded-[6px] border border-[#232323] bg-[#2f2f2f] text-[12px]">
            <span className="flex h-full flex-1 items-center border-r border-[#232323] pl-[5px] text-[#dedede]">不透明度 (%)</span>
            <span className="w-[37px] pl-[6px] text-[#707070]">100.0</span>
            <Stepper color="bg-[#555]" line="border-transparent" />
          </div>
        </div>
      </div>

      {/* palette */}
      <div className="flex h-[27px] shrink-0 items-end bg-[#333]">
        <div className="flex h-[16px]">
          <S size={17}><rect width="20" height="20" fill="#f5f5f5" /><path d="M0 0l20 20M20 0L0 20" stroke="#8b1a1a" strokeWidth="2" /></S>
          {palette.map((c, i) => (
            <div key={i} style={{ backgroundColor: c }} className="h-[16px] w-[17px] border-r border-[#333]" />
          ))}
        </div>
        <div className="ml-[7px] flex h-full items-center pb-[2px]">
          <div className="flex w-[31px] justify-center"><ChevronUp size={20} strokeWidth={3} color={W} /></div>
          <div className="flex w-[31px] justify-center"><ChevronDown size={20} strokeWidth={3} color={W} /></div>
          <div className="ml-[2px] flex h-[26px] w-[19px] flex-col items-center justify-center gap-[3px] rounded-[5px] border border-[#222] bg-[#3a3a3a]">
            <div className="h-[2px] w-[14px] bg-[#efefef]" />
            <div className="h-[2px] w-[14px] bg-[#efefef]" />
            <div className="h-[2px] w-[14px] bg-[#efefef]" />
          </div>
        </div>
      </div>

      {/* status bar */}
      <div className="flex h-[36px] shrink-0 items-center bg-[#343434] text-[12px] text-[#c4c4c4]">
        <div className="w-[47px] shrink-0 whitespace-nowrap text-right leading-[17px] tracking-[-1.200px]">
          <div>フィル:</div>
          <div>ストローク:</div>
        </div>
        <div className="ml-[22px] w-[89px] shrink-0 leading-[17px] tracking-[-1px]">
          <div>該当なし</div>
          <div>該当なし</div>
        </div>
        <span className="w-[14px] shrink-0">O:</span>
        <div className="flex h-[33px] w-[71px] shrink-0 items-center rounded-[6px] border border-[#262626]">
          <span className="w-[35px] pl-[7px] text-[#777]">100</span>
          <Stepper color="bg-[#585858]" line="border-[#2b2b2b]" />
        </div>
        <div className="ml-[19px] h-[17px] w-[3px] shrink-0 bg-[#4a78c8]" />
        <span className="ml-[5px] w-[50px] shrink-0 whitespace-nowrap text-[#bdbdbd]">Layer 1</span>
        <div className="ml-[3px] flex w-[24px] shrink-0 justify-center">
          <S size={18}><path d="M1 9c4-5 14-5 18 0-4 6-14 6-18 0z" fill={W} /><circle cx="10" cy="9.500" r="3.500" fill="#333" /><circle cx="10" cy="9.500" r="1.600" fill={W} /><path d="M2 4l2 2M18 4l-2 2" stroke={W} /></S>
        </div>
        <div className="ml-[13px] flex w-[24px] shrink-0 justify-center"><OpenLock size={17} /></div>
        <div className="ml-[14px] w-[672px] shrink-0 whitespace-nowrap text-[11.500px] leading-[17px] tracking-[-1.100px]">
          オブジェクトが選択されていません。オブジェクトをクリック、<span className="text-[12px] tracking-normal">Shift+</span>クリック、オブジェクト上で<span className="text-[12px] tracking-normal">Alt+</span>マウススクロール、または囲むようにドラッグして選択し
          <br />
          てください。
        </div>
        <div className="ml-[7px] grid w-[56px] shrink-0 grid-cols-[16px_1fr] leading-[17px]">
          <span>X:</span><span className="text-right">-16.93</span>
          <span>Y:</span><span className="text-right">68.79</span>
        </div>
        <span className="ml-[9px] w-[10px] shrink-0">Z:</span>
        <div className="flex h-[33px] w-[88px] shrink-0 items-center rounded-[6px] border border-[#262626]">
          <span className="w-[44px] pl-[8px]">100%</span>
          <Stepper color="bg-[#dcdcdc]" line="border-[#2b2b2b]" wide />
        </div>
        <span className="ml-[10px] w-[10px] shrink-0">R:</span>
        <div className="flex h-[33px] w-[93px] shrink-0 items-center rounded-[6px] border border-[#262626]">
          <span className="w-[49px] whitespace-nowrap pl-[13px]">0.00°</span>
          <Stepper color="bg-[#dcdcdc]" line="border-[#2b2b2b]" wide />
        </div>
      </div>

      {/* taskbar */}
      <div className="flex h-[40px] shrink-0 items-center bg-[#0c0b09] text-[12px] text-[#e8e8e8]">
        <TaskIcon cls="w-[48px] bg-black">
          <svg width="16" height="16" viewBox="0 0 16 16"><path d="M0 2.300L6.500 1.400v6.200H0zM7.300 1.300L16 0v7.600H7.300zM0 8.400h6.500v6.200L0 13.700zM7.300 8.400H16V16l-8.700-1.300z" fill="#fff" /></svg>
        </TaskIcon>
        <TaskIcon cls="w-[48px] bg-black">
          <svg width="20" height="14" viewBox="0 0 20 14" fill="none" stroke="#fff"><rect x="4.500" y=".5" width="11" height="13" /><path d="M2.500 2H.5v10h2M17.500 2h2v10h-2" /></svg>
        </TaskIcon>
        <TaskIcon cls="w-[50px] bg-black"><FaEdgeLegacy size={22} color="#0f6cc4" /></TaskIcon>
        <TaskIcon cls="w-[48px] bg-black">
          <svg width="22" height="18" viewBox="0 0 22 18"><path d="M0 1h8l2 2h12v15H0z" fill="#f2cf6c" /><path d="M0 5h22v2H0z" fill="#fbe7a8" /><path d="M7 11h8v7H7z" fill="#2ca6d8" /><path d="M9 15h4v3H9z" fill="#bfe6f5" /></svg>
        </TaskIcon>
        <TaskIcon cls="w-[50px] bg-black">
          <svg width="22" height="24" viewBox="0 0 22 24"><path d="M6 7V4a5 5 0 0 1 10 0v3" fill="none" stroke="#fff" strokeWidth="1" /><path d="M1 6h20l-1 17-19 1z" fill="#fff" /><path d="M6 10l4.500-.4v4.400H6zM11.500 9.500l4.500-.4V14h-4.500zM6 15h4.500v4.400L6 19zM11.500 15H16v5l-4.500-.4z" fill="#111" /></svg>
        </TaskIcon>
        <TaskIcon cls="w-[50px] bg-black">
          <svg width="20" height="22" viewBox="0 0 20 22"><rect width="20" height="22" fill="#6aa4cf" /><circle cx="10" cy="11" r="7.500" fill="#e8853a" /><circle cx="10" cy="11" r="5" fill="#fff" /><path d="M8 8l5 3-5 3z" fill="#e8853a" /></svg>
          <div className="absolute bottom-0 left-[5px] h-[2px] w-[40px] bg-[#8fc3ea]" />
        </TaskIcon>
        <TaskIcon cls="w-[48px] bg-[#3c3c3c]">
          <Logo size={24} />
          <div className="absolute bottom-0 left-0 h-[2px] w-full bg-[#8fc3ea]" />
        </TaskIcon>
        <div className="h-full flex-1">
          <svg width="853" height="40" className="block">
            {[[32, 16, 14], [92, 38, 12], [125, 20, 12], [232, 14, 14], [270, 4, 12], [168, 34, 12], [255, 36, 10], [300, 20, 10], [405, 24, 11], [365, 30, 10], [544, 24, 10], [665, 32, 10]].map(([x, y, r]) => (
              <circle key={x} cx={x} cy={y} r={r} fill="#2a2115" opacity="0.22" />
            ))}
          </svg>
        </div>
        <div className="flex h-full w-[171px] shrink-0 items-center bg-black">
          <div className="ml-[7px] flex w-[16px] justify-center"><ChevronUp size={16} strokeWidth={1.200} color="#eee" /></div>
          <div className="ml-[8px]">
            <svg width="18" height="18" viewBox="0 0 18 18" fill="none" stroke="#eee"><path d="M8 15H1.500V1.500h14V9M4 5h9M4 8h9M4 11h4" /><circle cx="12.500" cy="13" r="4" fill="#111" /><path d="M10.500 13h4" /></svg>
          </div>
          <span className="ml-[9px] w-[30px] text-[#dcdcdc]">日本</span>
          <div className="ml-[7px] w-[62px] whitespace-nowrap text-center leading-[20px] tracking-[-0.3px] text-[#dcdcdc]">
            <div>19:22</div>
            <div>2022/12/02</div>
          </div>
          <div className="ml-auto mr-[5px] h-full w-px bg-[#333]" />
        </div>
      </div>
    </div>
  );
}
